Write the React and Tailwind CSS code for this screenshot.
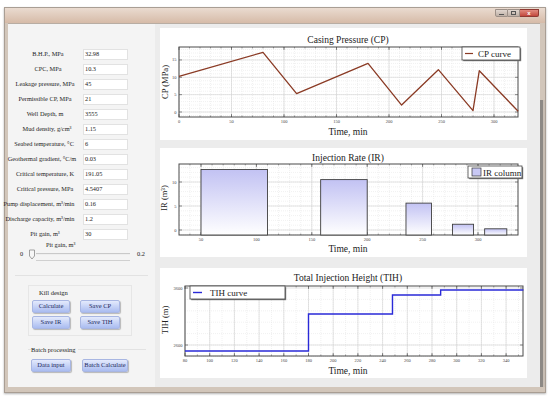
import React from "react";

// label, value, horizontal nudge of the label
const fields = [
  ["B.H.P., MPa", "32.98", 3],
  ["CPC, MPa", "10.3", 3],
  ["Leakage pressure, MPa", "45", 0],
  ["Permissible CP, MPa", "21", 0],
  ["Well Depth, m", "3555", 0],
  ["Mud density, g/cm³", "1.15", 2],
  ["Seabed temperature, °C", "6", -1],
  ["Geothermal gradient, °C/m", "0.03", -3],
  ["Critical temperature, K", "191.05", 0],
  ["Critical pressure, MPa", "4.5407", 0],
  ["Pump displacement, m³/min", "0.16", -6],
  ["Discharge capacity, m³/min", "1.2", -5],
  ["Pit gain, m³", "30", 0],
];

const range = (a, b, s) => {
  const out = [];
  for (let v = a; v <= b + 1e-9; v += s) out.push(v);
  return out;
};

// grid, ticks and frame of one plot
function Plot({ box, sx, sy, xMaj, xMin, yMaj, yMin }) {
  const [l, t, r, b] = box;
  return (
    <g>
      <rect x={l} y={t} width={r - l} height={b - t} fill="#fff" />
      {xMin.map((v) => (
        <line key={"xn" + v} x1={sx(v)} x2={sx(v)} y1={t} y2={b} stroke="#e2e2e2" strokeWidth="0.5" strokeDasharray="1 1" />
      ))}
      {yMin.map((v) => (
        <line key={"yn" + v} x1={l} x2={r} y1={sy(v)} y2={sy(v)} stroke="#e2e2e2" strokeWidth="0.5" strokeDasharray="1 1" />
      ))}
      {xMaj.map((v) => (
        <line key={"xj" + v} x1={sx(v)} x2={sx(v)} y1={t} y2={b} stroke="#d2d2d2" strokeWidth="0.6" />
      ))}
      {yMaj.map((v) => (
        <line key={"yj" + v} x1={l} x2={r} y1={sy(v)} y2={sy(v)} stroke="#d2d2d2" strokeWidth="0.6" />
      ))}
      {xMin.map((v) => (
        <g key={"xt" + v} stroke="#555" strokeWidth="0.5">
          <line x1={sx(v)} x2={sx(v)} y1={b} y2={b - 1.5} />
          <line x1={sx(v)} x2={sx(v)} y1={t} y2={t + 1.5} />
        </g>
      ))}
      {xMaj.map((v) => (
        <g key={"xT" + v} stroke="#444" strokeWidth="0.6">
          <line x1={sx(v)} x2={sx(v)} y1={b} y2={b - 3} />
          <line x1={sx(v)} x2={sx(v)} y1={t} y2={t + 3} />
        </g>
      ))}
      {yMaj.map((v) => (
        <g key={"yT" + v} stroke="#444" strokeWidth="0.6">
          <line x1={l} x2={l + 3} y1={sy(v)} y2={sy(v)} />
          <line x1={r} x2={r - 3} y1={sy(v)} y2={sy(v)} />
        </g>
      ))}
      <rect x={l} y={t} width={r - l} height={b - t} fill="none" stroke="#4a4a4a" strokeWidth="1" />
      {xMaj.map((v) => (
        <text key={"xl" + v} x={sx(v)} y={b + 6} fontSize="4.5" fill="#444" textAnchor="middle">
          {v}
        </text>
      ))}
      {yMaj.map((v) => (
        <text key={"yl" + v} x={l - 2.5} y={sy(v) + 1.5} fontSize="4.5" fill="#444" textAnchor="end">
          {v}
        </text>
      ))}
    </g>
  );
}

function Legend({ x, y, w, h, children }) {
  return (
    <g>
      <rect x={x + 1.2} y={y + 1.2} width={w} height={h} fill="#7a7a7a" />
      <rect x={x} y={y} width={w} height={h} fill="#fff" stroke="#444" strokeWidth="0.8" />
      {children}
    </g>
  );
}

function CasingChart() {
  const sx = (t) => 19 + t * 1.05;
  const sy = (v) => 84 - v * 3.47;
  const data = [[0, 10.3], [80, 17.2], [112, 5.3], [180, 14], [212, 2], [247, 12.2], [280, 0.4], [286, 11.9], [323, 0.2]];
  return (
    <svg width="367" height="112" className="block bg-white">
      <text x="188" y="15" fontSize="9.5" textAnchor="middle" fill="#222">Casing Pressure (CP)</text>
      <Plot box={[19, 19, 358, 89]} sx={sx} sy={sy} xMaj={range(0, 300, 50)} xMin={range(10, 320, 10)} yMaj={[0, 5, 10, 15]} yMin={range(-1, 18, 1)} />
      <polyline points={data.map(([t, v]) => `${sx(t)},${sy(v)}`).join(" ")} fill="none" stroke="#8a3a24" strokeWidth="1.3" strokeLinejoin="round" />
      <Legend x={302} y={19} w={58} h={13}>
        <line x1="305" x2="313" y1="25.5" y2="25.5" stroke="#8a3a24" strokeWidth="1.2" />
        <text x="318" y="28.8" fontSize="9" fill="#222">CP curve</text>
      </Legend>
      <text x="188" y="107" fontSize="9.5" textAnchor="middle" fill="#222">Time, min</text>
      <text transform="translate(8,54) rotate(-90)" fontSize="8.5" textAnchor="middle" fill="#222">CP (MPa)</text>
    </svg>
  );
}

function RateChart() {
  const sx = (t) => 41 + (t - 50) * 1.108;
  const sy = (v) => 82 - v * 4.8;
  const bars = [[50, 110, 12.6], [158, 200, 10.5], [235, 258, 5.6], [277, 296, 1.2], [306, 326, 0.25]];
  return (
    <svg width="367" height="109" className="block bg-white">
      <defs>
        <linearGradient id="barFill" x1="0" x2="0" y1="0" y2="1">
          <stop offset="0" stopColor="#c2c2f3" />
          <stop offset="1" stopColor="#ffffff" />
        </linearGradient>
      </defs>
      <text x="188" y="13" fontSize="9.5" textAnchor="middle" fill="#222">Injection Rate (IR)</text>
      <Plot box={[19, 16, 358, 87]} sx={sx} sy={sy} xMaj={range(50, 300, 50)} xMin={range(40, 330, 10)} yMaj={[0, 5, 10]} yMin={range(-1, 13, 1)} />
      {bars.map(([a, b, v]) => (
        <rect key={a} x={sx(a)} y={sy(v)} width={sx(b) - sx(a)} height={87 - sy(v)} fill="url(#barFill)" stroke="#3f3f3f" strokeWidth="0.9" />
      ))}
      <Legend x={308} y={18} w={54} h={12}>
        <rect x="312" y="20" width="9" height="8" fill="#c8c8f4" stroke="#333" strokeWidth="0.7" />
        <text x="323" y="27.5" fontSize="9" fill="#222">IR column</text>
      </Legend>
      <text x="188" y="104" fontSize="9.5" textAnchor="middle" fill="#222">Time, min</text>
      <text transform="translate(7,50) rotate(-90)" fontSize="8.5" textAnchor="middle" fill="#222">IR (m³)</text>
    </svg>
  );
}

function HeightChart() {
  const sx = (t) => 25 + (t - 80) * 1.235;
  const sy = (v) => 77 - (v - 2600) * 0.057;
  const pts = [[80, 83], [180, 83], [180, 46], [248, 46], [248, 27], [287, 27], [287, 22], [354, 22]];
  return (
    <svg width="367" height="110" className="block bg-white">
      <text x="188" y="13" fontSize="9.5" textAnchor="middle" fill="#222">Total Injection Height  (TIH)</text>
      <Plot box={[25, 18, 363, 88]} sx={sx} sy={sy} xMaj={range(80, 340, 20)} xMin={range(90, 350, 10)} yMaj={[2600, 3600]} yMin={range(2400, 3400, 200)} />
      <polyline points={pts.map(([t, y]) => `${sx(t)},${y}`).join(" ")} fill="none" stroke="#2a2ad8" strokeWidth="1.4" />
      <Legend x={30} y={18} w={95} h={13}>
        <line x1="33" x2="42" y1="24.5" y2="24.5" stroke="#2a2ad8" strokeWidth="1.4" />
        <text x="50" y="28" fontSize="9" fill="#222">TIH curve</text>
      </Legend>
      <text x="188" y="106" fontSize="9.5" textAnchor="middle" fill="#222">Time, min</text>
      <text transform="translate(8,52) rotate(-90)" fontSize="8.5" textAnchor="middle" fill="#222">TIH (m)</text>
    </svg>
  );
}

function Btn({ children, w }) {
  return (
    <button
      type="button"
      className={`h-[13px] ${w} rounded-[2px] border border-[#a8b6e2] bg-gradient-to-b from-[#e4eafc] to-[#aabcf0] text-[6.5px] leading-none text-[#1d2a5c] shadow-[1px_1px_1px_rgba(0,0,0,0.25)]`}
    >
      {children}
    </button>
  );
}

export default function App() {
  return (
    <div className="w-[550px] h-[399px] bg-white overflow-hidden font-['Liberation_Serif','Times_New_Roman',serif]">
      <div className="ml-[4px] mt-[7px] w-[542px] h-[386px] border border-[#a99e94] bg-[#d2c6ba] flex flex-col shadow-[0_1px_2px_rgba(0,0,0,0.3)]">
        {/* title bar */}
        <div className="h-[15px] bg-gradient-to-b from-[#eadbd0] to-[#d6bba8] flex justify-end items-start pr-[6px]">
          <div className="flex h-[8px] mt-[1px]">
            <div className="w-[13px] h-full bg-gradient-to-b from-[#e0d6cf] to-[#bfb0a6] border border-[#9d9088] rounded-bl-[2px] flex items-center justify-center">
              <div className="w-[5px] h-[1px] bg-[#555] mt-[2px]" />
            </div>
            <div className="w-[12px] h-full bg-gradient-to-b from-[#e0d6cf] to-[#bfb0a6] border-y border-r border-[#9d9088] flex items-center justify-center">
              <div className="w-[5px] h-[4px] border border-[#555]" />
            </div>
            <div className="w-[19px] h-full bg-gradient-to-b from-[#e08a7f] to-[#c2473c] border-y border-r border-[#8f3a33] rounded-br-[2px] flex items-center justify-center text-[6px] leading-none text-white font-['Liberation_Sans',sans-serif] font-bold">
              x
            </div>
          </div>
        </div>

        <div className="flex-1 flex pl-[3px] pb-[5px]">
          {/* client area */}
          <div className="w-[532px] flex bg-[#ececec] border-t border-[#b8ada3]">
            {/* left form panel */}
            <div className="w-[147px] bg-[#f4f4f4] flex flex-col pt-[23px] text-[6.3px] leading-none text-[#222]">
              {fields.map(([label, value, dx]) => (
                <div key={label} className="h-[15px] flex items-center">
                  <div className="w-[75px] pr-[1px] flex justify-center whitespace-nowrap">
                    <span style={{ marginLeft: dx * 2 }}>{label}</span>
                  </div>
                  <div className="w-[45px] h-[11px] bg-white border border-[#e2e2e2] flex items-center pl-[1px] text-[6.3px]">
                    {value}
                  </div>
                </div>
              ))}
              <div className="h-[8px] flex items-center pl-[38px] text-[6.3px] -mt-[1px]">Pit gain, m³</div>
              <div className="h-[11px] flex items-center text-[6.3px]">
                <span className="ml-[12px] w-[8px]">0</span>
                <svg width="8" height="11" className="block">
                  <path d="M1.5 1 H6.5 V7 L4 10 L1.5 7 Z" fill="#f7f7f7" stroke="#8a8a8a" strokeWidth="0.8" />
                </svg>
                <div className="w-[94px] flex flex-col gap-[5px] mt-[5px]">
                  <div className="h-[2px] bg-[#c9c9c9] border-b border-[#eee]" />
                  <div className="h-[1px] bg-[#d0d0d0]" />
                </div>
                <span className="ml-[7px]">0.2</span>
              </div>
              <div className="mt-[15px] mx-[7px] h-[1px] bg-[#e2e2e2]" />

              <div className="mt-[9px] ml-[20px] w-[104px] border border-[#e6e6e6] pt-[3px] pb-[6px] pl-[3px]">
                <div className="text-[6.5px] h-[9px] flex items-center pl-[7px]">Kill design</div>
                <div className="mt-[2px] grid grid-cols-[38px_40px] gap-x-[10px] gap-y-[3px]">
                  <Btn w="w-[38px]">Calculate</Btn>
                  <Btn w="w-[40px]">Save CP</Btn>
                  <Btn w="w-[38px]">Save IR</Btn>
                  <Btn w="w-[40px]">Save TIH</Btn>
                </div>
              </div>

              <div className="mt-[13px] ml-[20px] w-[118px] border-t border-[#e2e2e2] pl-[3px]">
                <div className="text-[6.5px] h-[9px] flex items-center -mt-[4px] bg-[#f4f4f4] w-fit pr-[2px]">Batch processing</div>
                <div className="mt-[4px] flex gap-[11px]">
                  <Btn w="w-[40px]">Data input</Btn>
                  <Btn w="w-[46px]">Batch Calculate</Btn>
                </div>
              </div>
            </div>

            {/* charts */}
            <div className="ml-[5px] pt-[4px] flex flex-col">
              <CasingChart />
              <div className="mt-[8px]">
                <RateChart />
              </div>
              <div className="mt-[11px]">
                <HeightChart />
              </div>
            </div>
          </div>
          {/* right frame with scroll strip */}
          <div className="w-[5px] flex flex-col">
            <div className="h-[77px]" />
            <div className="flex-1 flex">
              <div className="w-[3px] bg-[#8d8985]" />
              <div className="flex-1 bg-[#c7bdb3]" />
            </div>
          </div>
        </div>
      </div>
    </div>
  );
}
